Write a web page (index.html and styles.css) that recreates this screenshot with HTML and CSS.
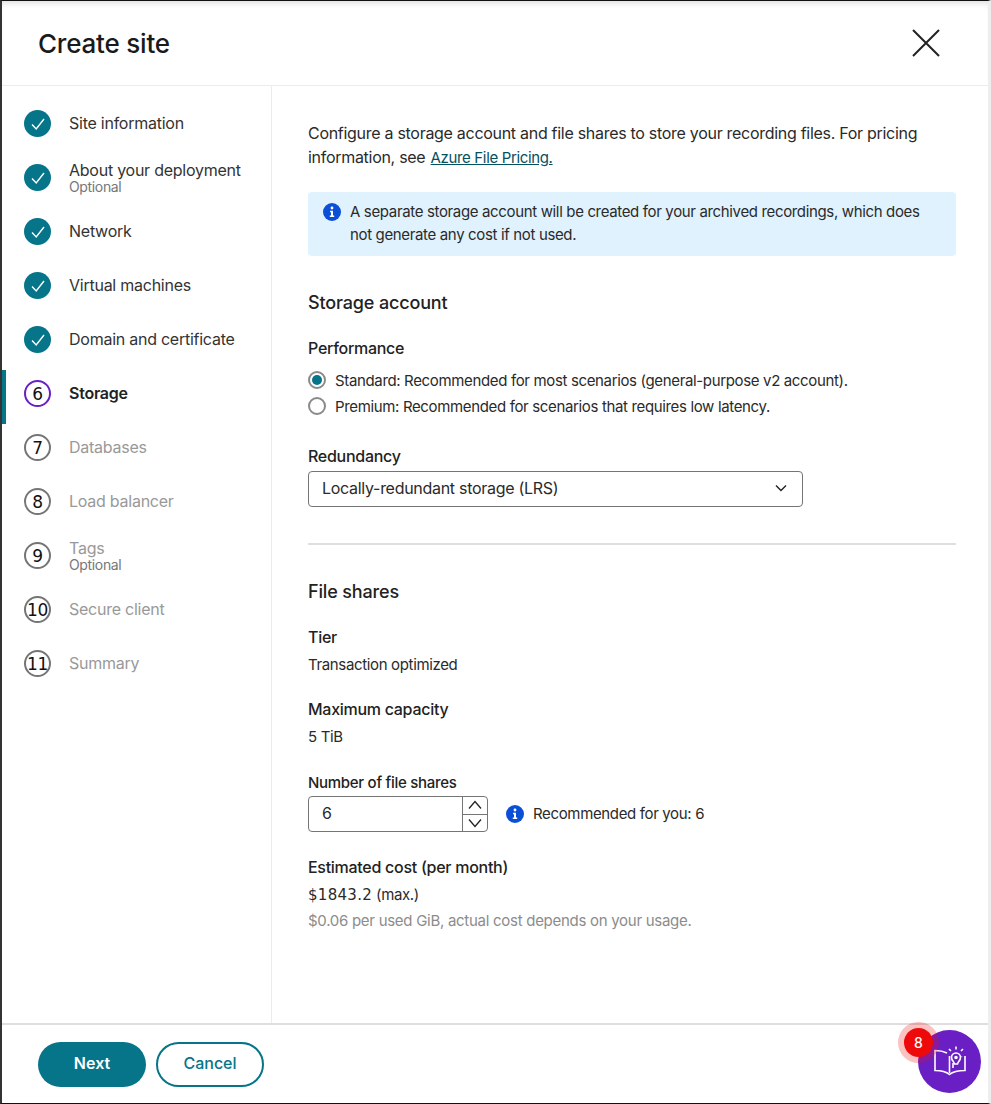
FILE: index.html
```html
<!DOCTYPE html>
<html lang="en">
<head>
    <meta charset="UTF-8">
    <meta name="viewport" content="width=device-width, initial-scale=1.0">
    <title>Create site</title>
    <link rel="stylesheet" href="styles.css">
</head>
<body>
    <div class="dialog">
        <header class="dialog-header">
            <h1>Create site</h1>
            <svg class="close-icon" width="30" height="30" viewBox="0 0 30 30"><path d="M2 2 L28 28 M28 2 L2 28" stroke="#222" stroke-width="2" fill="none"/></svg>
        </header>

        <div class="dialog-body">
            <nav class="steps">
                <div class="step done">
                    <span class="step-icon"><svg width="16" height="16" viewBox="0 0 16 16"><path d="M2 8.5 L6.2 13 L14 3" stroke="#fff" stroke-width="1.4" fill="none"/></svg></span>
                    <div class="step-text"><span class="step-label">Site information</span></div>
                </div>
                <div class="step done">
                    <span class="step-icon"><svg width="16" height="16" viewBox="0 0 16 16"><path d="M2 8.5 L6.2 13 L14 3" stroke="#fff" stroke-width="1.4" fill="none"/></svg></span>
                    <div class="step-text"><span class="step-label">About your deployment</span><span class="step-note">Optional</span></div>
                </div>
                <div class="step done">
                    <span class="step-icon"><svg width="16" height="16" viewBox="0 0 16 16"><path d="M2 8.5 L6.2 13 L14 3" stroke="#fff" stroke-width="1.4" fill="none"/></svg></span>
                    <div class="step-text"><span class="step-label">Network</span></div>
                </div>
                <div class="step done">
                    <span class="step-icon"><svg width="16" height="16" viewBox="0 0 16 16"><path d="M2 8.5 L6.2 13 L14 3" stroke="#fff" stroke-width="1.4" fill="none"/></svg></span>
                    <div class="step-text"><span class="step-label">Virtual machines</span></div>
                </div>
                <div class="step done">
                    <span class="step-icon"><svg width="16" height="16" viewBox="0 0 16 16"><path d="M2 8.5 L6.2 13 L14 3" stroke="#fff" stroke-width="1.4" fill="none"/></svg></span>
                    <div class="step-text"><span class="step-label">Domain and certificate</span></div>
                </div>
                <div class="step current">
                    <span class="step-icon">6</span>
                    <div class="step-text"><span class="step-label">Storage</span></div>
                </div>
                <div class="step todo">
                    <span class="step-icon">7</span>
                    <div class="step-text"><span class="step-label">Databases</span></div>
                </div>
                <div class="step todo">
                    <span class="step-icon">8</span>
                    <div class="step-text"><span class="step-label">Load balancer</span></div>
                </div>
                <div class="step todo">
                    <span class="step-icon">9</span>
                    <div class="step-text"><span class="step-label">Tags</span><span class="step-note">Optional</span></div>
                </div>
                <div class="step todo">
                    <span class="step-icon">10</span>
                    <div class="step-text"><span class="step-label">Secure client</span></div>
                </div>
                <div class="step todo">
                    <span class="step-icon">11</span>
                    <div class="step-text"><span class="step-label">Summary</span></div>
                </div>
            </nav>

            <main class="content">
                <p class="intro">Configure a storage account and file shares to store your recording files. For pricing information, see <a href="#">Azure File Pricing.</a></p>

                <div class="info-box">
                    <svg class="info-icon" width="18" height="18" viewBox="0 0 18 18"><circle cx="9" cy="9" r="9" fill="#0b4fd6"/><circle cx="9" cy="5" r="1.4" fill="#fff"/><path d="M7 7.8 H10 V12.6 H11.2 V14 H6.8 V12.6 H8 V9.2 H7 Z" fill="#fff"/></svg>
                    <p>A separate storage account will be created for your archived recordings, which does not generate any cost if not used.</p>
                </div>

                <h2 class="section-title storage-title">Storage account</h2>

                <div class="field-label performance-label">Performance</div>
                <label class="radio-row"><span class="radio checked"></span>Standard: Recommended for most scenarios (general-purpose v2 account).</label>
                <label class="radio-row"><span class="radio"></span>Premium: Recommended for scenarios that requires low latency.</label>

                <div class="field-label redundancy-label">Redundancy</div>
                <div class="select">
                    <span>Locally-redundant storage (LRS)</span>
                    <svg width="14" height="14" viewBox="0 0 14 14"><path d="M2 4.5 L7 9.5 L12 4.5" stroke="#222" stroke-width="1.4" fill="none"/></svg>
                </div>

                <hr class="divider">

                <h2 class="section-title">File shares</h2>

                <div class="field-label tier-label">Tier</div>
                <div class="field-value">Transaction optimized</div>

                <div class="field-label capacity-label">Maximum capacity</div>
                <div class="field-value">5 TiB</div>

                <div class="field-label shares-label">Number of file shares</div>
                <div class="shares-row">
                    <div class="number-input">
                        <span class="number-value">6</span>
                        <div class="spinner">
                            <span class="spin-btn"><svg width="14" height="10" viewBox="0 0 14 10"><path d="M1 8.5 L7 1.5 L13 8.5" stroke="#222" stroke-width="1.3" fill="none"/></svg></span>
                            <span class="spin-btn"><svg width="14" height="10" viewBox="0 0 14 10"><path d="M1 1.5 L7 8.5 L13 1.5" stroke="#222" stroke-width="1.3" fill="none"/></svg></span>
                        </div>
                    </div>
                    <svg class="info-icon" width="18" height="18" viewBox="0 0 18 18"><circle cx="9" cy="9" r="9" fill="#0b4fd6"/><circle cx="9" cy="5" r="1.4" fill="#fff"/><path d="M7 7.8 H10 V12.6 H11.2 V14 H6.8 V12.6 H8 V9.2 H7 Z" fill="#fff"/></svg>
                    <span class="shares-hint">Recommended for you: 6</span>
                </div>

                <div class="field-label cost-label">Estimated cost (per month)</div>
                <div class="field-value"><span class="cost-amount">$1843.2</span> (max.)</div>
                <div class="cost-note">$0.06 per used GiB, actual cost depends on your usage.</div>
            </main>
        </div>

        <footer class="dialog-footer">
            <button class="btn btn-primary">Next</button>
            <button class="btn btn-secondary">Cancel</button>
        </footer>

        <div class="help-fab">
            <svg width="32" height="32" viewBox="0 0 32 32" fill="none" stroke="#fff" stroke-width="1.6">
                <path d="M13 7 C9 5 5 4.5 1 4.5 V24.5 C7 24.5 12 25.5 15.5 28.5 C19 25.5 25 24.5 31 24.5 V10"/>
                <path d="M15.5 10 V27"/>
                <path d="M19 17 V22 M27.5 10 V10.5"/>
                <path d="M20.5 18 C20 15.5 17.5 14.5 17.5 11.5 A4.5 4.5 0 0 1 26.5 11.5 C26.5 14.5 24 15.5 23.5 18 Z"/>
                <path d="M22 0.5 V3.5 M15 3 L17 5 M29 3 L27 5"/>
                <circle cx="22" cy="11.5" r="1" fill="#fff"/>
            </svg>
        </div>
        <div class="help-badge">8</div>
    </div>
</body>
</html>
```

FILE: styles.css
```css
* {
    box-sizing: border-box;
}
html, body {
    margin: 0;
    height: 100%;
}
body {
    font-family: Inter, "Liberation Sans", sans-serif;
    font-size: 15px;
    letter-spacing: -0.35px;
    color: #2a2a2a;
    background-color: #fff;
}
.dialog {
    position: relative;
    display: flex;
    flex-direction: column;
    height: 1104px;
    overflow: hidden;
    border-top: 1px solid #111;
    border-left: 2px solid #333;
    border-bottom: 1px solid #111;
    border-right: 3px solid #eee;
    background-color: #fff;
}
.dialog-header {
    display: flex;
    align-items: center;
    justify-content: space-between;
    flex-shrink: 0;
    height: 85px;
    padding: 0 47px 0 36px;
    border-bottom: 1px solid #ececec;
    box-shadow: inset 0 6px 6px -4px #ddd;
}
.dialog-header h1 {
    margin: 0;
    font-size: 26px;
    font-weight: 500;
    letter-spacing: -0.2px;
    color: #1a1a1a;
}
.dialog-body {
    display: flex;
    flex: 1;
    min-height: 0;
}
.steps {
    flex-shrink: 0;
    width: 270px;
    padding-top: 14px;
    border-right: 1px solid #ececec;
}
.step {
    display: flex;
    align-items: flex-start;
    gap: 18px;
    height: 54px;
    padding: 10px 0 0 22px;
}
.step-icon {
    display: flex;
    align-items: center;
    justify-content: center;
    flex-shrink: 0;
    width: 27px;
    height: 27px;
    border-radius: 50%;
    font-family: "DejaVu Sans", sans-serif;
    font-size: 17px;
    letter-spacing: -0.3px;
    color: #111;
}
.step.done .step-icon {
    background-color: #067489;
}
.step.current {
    border-left: 4px solid #067489;
    padding-left: 18px;
}
.step.current .step-icon {
    border: 2px solid #6a1fc4;
}
.step.todo .step-icon {
    border: 2px solid #757575;
}
.step-text {
    display: flex;
    flex-direction: column;
    justify-content: center;
    height: 27px;
    margin-top: -1px;
}
.step-label {
    font-size: 16px;
    line-height: 20px;
    letter-spacing: -0.25px;
    color: #333;
}
.step.current .step-label {
    font-weight: 600;
    color: #222;
}
.step.todo .step-label {
    color: #999;
}
.step-note {
    font-size: 14px;
    line-height: 14px;
    color: #777;
}
.content {
    flex: 1;
    padding: 35px 32px 0 36px;
}
.intro {
    margin: 0;
    font-size: 16px;
    line-height: 24px;
    letter-spacing: -0.29px;
}
.intro a {
    margin-left: 1px;
    font-size: 15px;
    line-height: 20px;
    letter-spacing: -0.35px;
    color: #05505f;
}
.info-box {
    display: flex;
    align-items: flex-start;
    gap: 9px;
    margin-top: 23px;
    padding: 8px 34px 8px 15px;
    min-height: 64px;
    background-color: #e0f2fe;
    border-radius: 4px;
}
.info-box p {
    margin: 0;
    line-height: 23px;
}
.info-box .info-icon {
    margin-top: 3px;
}
.info-icon {
    flex-shrink: 0;
}
.section-title {
    margin: 0;
    font-size: 18px;
    line-height: 24px;
    font-weight: 500;
    letter-spacing: -0.15px;
    color: #222;
}
.storage-title {
    margin-top: 35px;
}
.field-label {
    font-size: 16px;
    line-height: 20px;
    font-weight: 500;
    letter-spacing: -0.28px;
    color: #222;
}
.performance-label {
    margin-top: 23px;
}
.radio-row {
    display: flex;
    align-items: center;
    gap: 9px;
    height: 26px;
}
.performance-label + .radio-row {
    margin-top: 9px;
}
.radio {
    flex-shrink: 0;
    position: relative;
    width: 18px;
    height: 18px;
    border: 2px solid #8a8a8a;
    border-radius: 50%;
}
.radio.checked::after {
    content: "";
    position: absolute;
    inset: 2px;
    border-radius: 50%;
    background-color: #067489;
}
.redundancy-label {
    margin-top: 27px;
}
.select {
    display: flex;
    align-items: center;
    justify-content: space-between;
    width: 495px;
    height: 36px;
    margin-top: 5px;
    padding: 0 14px 2px 13px;
    border: 1px solid #757575;
    border-radius: 4px;
    font-size: 16px;
    letter-spacing: -0.29px;
}
.divider {
    height: 2px;
    margin: 36px 0 0;
    border: 0;
    background-color: #dedede;
}
.divider + .section-title {
    margin-top: 35px;
}
.tier-label {
    margin-top: 23px;
}
.field-value {
    margin-top: 8px;
    line-height: 20px;
}
.capacity-label {
    margin-top: 24px;
}
.shares-label {
    margin-top: 26px;
    font-size: 15px;
}
.shares-row {
    display: flex;
    align-items: center;
    margin-top: 3px;
}
.shares-row .info-icon {
    margin: 0 9px 0 18px;
}
.shares-hint {
    position: relative;
    top: -1px;
}
.number-input {
    display: flex;
    width: 180px;
    height: 36px;
    border: 1px solid #757575;
    border-radius: 4px;
}
.number-value {
    flex: 1;
    padding-left: 13px;
    font-size: 16px;
    line-height: 32px;
}
.spinner {
    display: flex;
    flex-direction: column;
    width: 25px;
    border-left: 1px solid #757575;
}
.spin-btn {
    display: flex;
    flex: 1;
    align-items: center;
    justify-content: center;
}
.spin-btn + .spin-btn {
    border-top: 1px solid #757575;
}
.cost-label {
    margin-top: 25px;
}
.cost-amount {
    font-family: "DejaVu Sans", sans-serif;
    font-size: 15px;
    letter-spacing: 0.3px;
}
.cost-note {
    margin-top: 6px;
    line-height: 20px;
    letter-spacing: -0.28px;
    color: #8c8c8c;
}
.dialog-footer {
    display: flex;
    align-items: flex-start;
    gap: 10px;
    flex-shrink: 0;
    height: 80px;
    padding: 17px 0 0 36px;
    border-top: 2px solid #dedede;
}
.btn {
    width: 108px;
    height: 45px;
    padding-bottom: 4px;
    border-radius: 23px;
    font-family: inherit;
    font-size: 16px;
    cursor: pointer;
}
.btn-primary {
    border: none;
    background-color: #067489;
    color: #fff;
    font-weight: 600;
}
.btn-secondary {
    border: 2px solid #067489;
    background-color: #fff;
    color: #067489;
    font-weight: 500;
}
.help-fab {
    position: absolute;
    right: 7px;
    bottom: 10px;
    display: flex;
    align-items: center;
    justify-content: center;
    width: 63px;
    height: 63px;
    border-radius: 50%;
    background-color: #6a1fc4;
}
.help-badge {
    position: absolute;
    right: 55px;
    bottom: 46px;
    display: flex;
    align-items: center;
    justify-content: center;
    width: 29px;
    height: 29px;
    border-radius: 50%;
    background-color: #ee0a0a;
    box-shadow: 0 0 0 6px rgba(238, 10, 10, 0.25);
    color: #fff;
    font-size: 14px;
    font-weight: 500;
    letter-spacing: 0;
}
```
